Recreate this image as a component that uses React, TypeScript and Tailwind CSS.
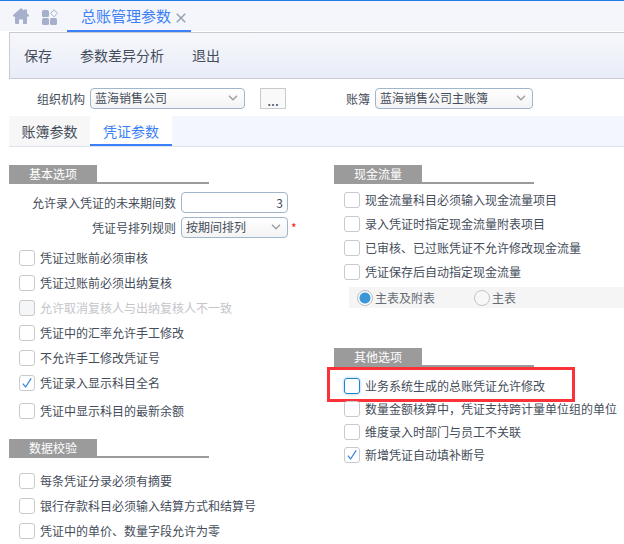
import React from 'react';

interface Option {
  id: string;
  label: string;
  checked?: boolean;
  disabled?: boolean;
}

const reviewOptions: Option[] = [
  { id: 'audit', label: '凭证过账前必须审核' },
  { id: 'cashier', label: '凭证过账前必须出纳复核' },
  { id: 'cancel', label: '允许取消复核人与出纳复核人不一致', disabled: true },
  { id: 'rate', label: '凭证中的汇率允许手工修改' },
  { id: 'number', label: '不允许手工修改凭证号' },
  { id: 'fullname', label: '凭证录入显示科目全名', checked: true },
];

const checkOptions: Option[] = [
  { id: 'summary', label: '每条凭证分录必须有摘要' },
  { id: 'bank', label: '银行存款科目必须输入结算方式和结算号' },
  { id: 'zero', label: '凭证中的单价、数量字段允许为零' },
];

const cashOptions: Option[] = [
  { id: 'cashitem', label: '现金流量科目必须输入现金流量项目' },
  { id: 'schedule', label: '录入凭证时指定现金流量附表项目' },
  { id: 'locked', label: '已审核、已过账凭证不允许修改现金流量' },
  { id: 'autocash', label: '凭证保存后自动指定现金流量' },
];

const otherOptions: Option[] = [
  { id: 'unit', label: '数量金额核算中，凭证支持跨计量单位组的单位' },
  { id: 'dept', label: '维度录入时部门与员工不关联' },
  { id: 'fill', label: '新增凭证自动填补断号', checked: true },
];

const SectionTitle: React.FC<{ children: React.ReactNode }> = ({ children }) => (
  <div className="w-[200px] border-b-2 border-[#9b9b9b]">
    <h2 className="h-[17px] w-[88px] bg-[#9b9b9b] text-center leading-[17px] text-white">{children}</h2>
  </div>
);

const CheckItem: React.FC<{ option: Option; focused?: boolean }> = ({ option, focused }) => (
  <div className="flex h-4 items-center gap-[5px]">
    <span className="relative size-4 shrink-0">
      <input
        id={option.id}
        type="checkbox"
        defaultChecked={option.checked}
        disabled={option.disabled}
        className={`peer block size-4 appearance-none rounded-[3px] border outline-none disabled:bg-[#f5f6f8] ${
          focused ? 'border-[#1b86cf] shadow-[0_0_3px_#8cc4ea]' : 'border-[#c9cacd]'
        }`}
      />
      <svg
        viewBox="0 0 16 16"
        className="pointer-events-none absolute inset-0 hidden size-4 fill-none stroke-[#3f87d9] peer-checked:block"
      >
        <path d="M3.8 8.6 6.6 12 12.2 3.4" strokeWidth="1.3" />
      </svg>
    </span>
    <label htmlFor={option.id} className={`whitespace-nowrap ${option.disabled ? 'text-[#c3c5c9]' : ''}`}>
      {option.label}
    </label>
  </div>
);

const SelectBox: React.FC<{ id: string; value: string; className: string }> = ({ id, value, className }) => (
  <span className={`relative block h-[21px] ${className}`}>
    <select
      id={id}
      className="block h-full w-full appearance-none rounded-[4px] border border-[#9fb6cb] bg-linear-to-b from-white to-[#f3f3f3] pb-[2px] pl-1 pr-6 leading-4 outline-none"
    >
      <option>{value}</option>
    </select>
    <svg
      viewBox="0 0 10 6"
      className="pointer-events-none absolute right-[7px] top-[7px] h-[6px] w-[10px] fill-none stroke-[#9b9ea3]"
    >
      <path d="M1 .8 5 4.8 9 .8" strokeWidth="1.4" />
    </svg>
  </span>
);

const RadioItem: React.FC<{ id: string; label: string; checked?: boolean }> = ({ id, label, checked }) => (
  <div className="flex items-center gap-[2px]">
    <input
      id={id}
      name="table"
      type="radio"
      defaultChecked={checked}
      className="size-4 appearance-none rounded-full border border-[#c4c5c8] bg-[#f7f7f7] outline-none checked:border-[#b9bcc1] checked:bg-[radial-gradient(circle,#3b97d8_5px,#fff_6px)]"
    />
    <label htmlFor={id}>{label}</label>
  </div>
);

const App: React.FC = () => {
  return (
    <div className="min-h-screen bg-white font-['Noto_Sans_CJK_SC',sans-serif] text-[12px] leading-4 text-[#454d5a]">
      <header className="flex h-[31px] border-t border-[#1f7be6] bg-[#f5f6fb]">
        <button aria-label="首页" className="ml-[13px] mt-[7px] size-4">
          <svg viewBox="0 0 16 16" className="fill-[#a7b0cb]">
            <path d="M8 0 11 2.6V1.4h3v3.8l2 1.9v1.4h-2V15a1 1 0 0 1-1 1h-3v-4.5H6V16H3a1 1 0 0 1-1-1V8.500H0V7.100z" />
          </svg>
        </button>
        <button aria-label="应用" className="ml-[13px] mt-2 size-4">
          <svg viewBox="0 0 16 16" className="fill-[#a7b0cb]">
            <rect x="0" y="1" width="7" height="7" rx="1.5" />
            <rect x="0" y="9" width="7" height="7" rx="1.5" />
            <rect x="8" y="9" width="7" height="7" rx="1.5" />
            <path d="M12 .8 15.5 4.3 12 7.8 8.5 4.3z" fill="none" stroke="#a7b0cb" />
          </svg>
        </button>
        <div className="-mb-px ml-[9px] flex w-[124px] items-center border-b-2 border-[#3c80f7] pl-[14px] text-[#3c80f7]">
          <span className="text-[15px] leading-5">总账管理参数</span>
          <button aria-label="关闭" className="ml-[5px] mt-1 size-[10px]">
            <svg viewBox="0 0 10 10" className="stroke-[#96a5b3]">
              <path d="M.8 .8 9.200 9.200M9.200 .8 .8 9.200" strokeWidth="1.6" />
            </svg>
          </button>
        </div>
      </header>

      <div className="ml-[9px] mt-px">
        <nav className="flex h-[47px] items-center gap-7 border-y border-l border-[#c8c9d3] bg-linear-to-b from-[#f6f7fb] to-[#e9edf8] pb-[2px] pl-[14px] text-[14px]">
          <button>保存</button>
          <button>参数差异分析</button>
          <button>退出</button>
        </nav>

        <div className="flex h-[37px] items-center pl-7 pt-[2px]">
          <label htmlFor="org" className="mr-[5px]">组织机构</label>
          <SelectBox id="org" value="蓝海销售公司" className="w-[155px]" />
          <button className="ml-[15px] h-[21px] w-[26px] border border-[#c9cacd] bg-[#f9f9f9] pt-[2px] text-[14px] leading-4">...</button>
          <label htmlFor="book" className="ml-[60px] mr-[5px]">账簿</label>
          <SelectBox id="book" value="蓝海销售公司主账簿" className="w-[158px]" />
        </div>

        <div className="flex h-[31px] border-b border-[#dde1ee] bg-[#f3f6fc] text-[14px]">
          <button className="w-[81px] bg-[#f7f7f7]">账簿参数</button>
          <button className="w-[82px] rounded-t-[3px] border-b-2 border-[#3c80f7] bg-white pt-[2px] text-[#3c80f7]">凭证参数</button>
        </div>

        <main className="grid grid-cols-[325px_minmax(0,1fr)] pt-[18px]">
          <div>
            <SectionTitle>基本选项</SectionTitle>
            <div className="mt-2 grid grid-cols-[167px_107px_auto] items-center gap-y-1">
              <label htmlFor="periods" className="text-right">允许录入凭证的未来期间数</label>
              <input
                id="periods"
                defaultValue="3"
                className="col-start-2 ml-[5px] h-[21px] w-[107px] rounded-[4px] border border-[#9fb6cb] px-1 text-right outline-none"
              />
              <label htmlFor="rule" className="col-start-1 text-right">凭证号排列规则</label>
              <SelectBox id="rule" value="按期间排列" className="ml-[5px] w-[107px]" />
              <span className="ml-2 text-[#f02020]">*</span>
            </div>
            <div className="mt-3 flex flex-col gap-[9px] pl-[10px]">
              {reviewOptions.map((option) => (
                <CheckItem key={option.id} option={option} />
              ))}
            </div>
            <div className="mb-5 mt-3 pl-[10px]">
              <CheckItem option={{ id: 'balance', label: '凭证中显示科目的最新余额' }} />
            </div>

            <SectionTitle>数据校验</SectionTitle>
            <div className="mt-[15px] flex flex-col gap-[9px] pl-[10px]">
              {checkOptions.map((option) => (
                <CheckItem key={option.id} option={option} />
              ))}
            </div>
          </div>

          <div>
            <SectionTitle>现金流量</SectionTitle>
            <div className="mt-2 flex flex-col gap-2 pl-[10px]">
              {cashOptions.map((option) => (
                <CheckItem key={option.id} option={option} />
              ))}
            </div>
            <div className="mb-10 ml-[15px] mt-[7px] flex h-[21px] items-center gap-[39px] bg-[#f5f5f5] pl-2 text-[#666b74]">
              <RadioItem id="both" label="主表及附表" checked />
              <RadioItem id="main" label="主表" />
            </div>

            <SectionTitle>其他选项</SectionTitle>
            <div className="mt-[11px] flex flex-col gap-[7px] pl-[10px]">
              <div className="relative w-fit">
                <CheckItem option={{ id: 'modify', label: '业务系统生成的总账凭证允许修改' }} focused />
                {/* callout frame around the highlighted option */}
                <div className="pointer-events-none absolute -bottom-2 -left-[17px] -right-[30px] -top-[11px] border-[3px] border-[#fb3237]" />
              </div>
              {otherOptions.map((option) => (
                <CheckItem key={option.id} option={option} />
              ))}
            </div>
          </div>
        </main>
      </div>
    </div>
  );
};

export default App;
